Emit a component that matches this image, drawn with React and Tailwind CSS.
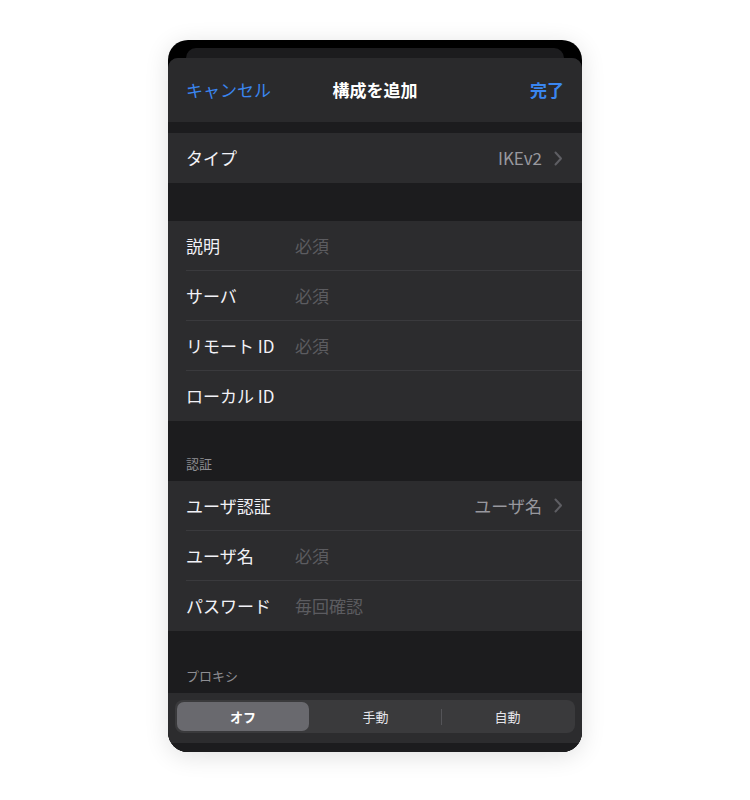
import { useState } from "react";

const font = { fontFamily: '"Noto Sans CJK JP", "Noto Sans", sans-serif' };

function Chevron() {
  return (
    <svg width="9" height="15" viewBox="0 0 9 15" className="ml-3 shrink-0">
      <path d="M1.5 1.5 L7 7.5 L1.5 13.5" fill="none" stroke="#5e5e63" strokeWidth="2" strokeLinecap="round" strokeLinejoin="round" />
    </svg>
  );
}

function Row({ label, placeholder, value, chevron, last }) {
  return (
    <div className="flex h-[50px] pl-[18px]">
      <div className={`flex flex-1 items-center pr-[19px] ${last ? "" : "border-b border-[#3a3a3d]"}`}>
        <span className="w-[109px] shrink-0 text-[17px] text-[#f2f2f7]">{label}</span>
        {placeholder && <span className="text-[17px] text-[#5c5c60]">{placeholder}</span>}
        {value && (
          <div className="ml-auto flex items-center">
            <span className="text-[17px] text-[#98989e]">{value}</span>
            {chevron && <Chevron />}
          </div>
        )}
      </div>
    </div>
  );
}

function Group({ children }) {
  return <div className="bg-[#2c2c2e]">{children}</div>;
}

function SectionHeader({ title, height }) {
  return (
    <div className={`flex shrink-0 items-end px-[18px] pb-[8px] ${height}`}>
      <span className="text-[13px] text-[#8e8e93]">{title}</span>
    </div>
  );
}

export default function App() {
  const [proxy, setProxy] = useState(0);
  const options = ["オフ", "手動", "自動"];

  return (
    <div className="flex h-[800px] w-[750px] justify-center bg-white pt-[40px]" style={font}>
      <div className="flex h-[712px] w-[414px] flex-col overflow-hidden rounded-[20px] bg-black pt-[8px] shadow-[0_4px_24px_rgba(0,0,0,0.12)]">
        {/* sheet underneath */}
        <div className="mx-[18px] h-[10px] shrink-0 rounded-t-[10px] bg-[#1c1c1e]" />

        <div className="flex flex-1 flex-col overflow-hidden rounded-t-[10px] bg-[#1c1c1e]">
          {/* nav bar */}
          <div className="flex h-[64px] shrink-0 items-center justify-between bg-[#2a2a2c] px-[18px]">
            <span className="w-[90px] text-[17px] text-[#3a86f0]">キャンセル</span>
            <span className="text-[17px] font-bold text-white">構成を追加</span>
            <span className="w-[90px] text-right text-[17px] font-bold text-[#3a86f0]">完了</span>
          </div>

          <div className="h-[11px] shrink-0" />
          <Group>
            <Row label="タイプ" value="IKEv2" chevron last />
          </Group>

          <div className="h-[38px] shrink-0" />
          <Group>
            <Row label="説明" placeholder="必須" />
            <Row label="サーバ" placeholder="必須" />
            <Row label="リモート ID" placeholder="必須" />
            <Row label="ローカル ID" last />
          </Group>

          <SectionHeader title="認証" height="h-[60px]" />
          <Group>
            <Row label="ユーザ認証" value="ユーザ名" chevron />
            <Row label="ユーザ名" placeholder="必須" />
            <Row label="パスワード" placeholder="毎回確認" last />
          </Group>

          <SectionHeader title="プロキシ" height="h-[62px]" />
          <div className="h-[50px] shrink-0 bg-[#2c2c2e] px-[7px] pt-[7px]">
            <div className="flex h-[33px] rounded-[8px] bg-[#3a3a3c] p-[2px]">
              {options.map((opt, i) => (
                <div key={opt} className="flex flex-1 items-center">
                  {i > 0 && (
                    <div className={`h-[16px] w-px ${proxy === i || proxy === i - 1 ? "bg-transparent" : "bg-[#545458]"}`} />
                  )}
                  <button
                    onClick={() => setProxy(i)}
                    className={`flex h-full flex-1 items-center justify-center rounded-[7px] text-[13px] ${
                      proxy === i ? "bg-[#69696e] font-bold text-white" : "text-[#e5e5ea]"
                    }`}
                  >
                    {opt}
                  </button>
                </div>
              ))}
            </div>
          </div>
          <div className="flex-1 bg-[#1c1c1e]" />
        </div>
      </div>
    </div>
  );
}
